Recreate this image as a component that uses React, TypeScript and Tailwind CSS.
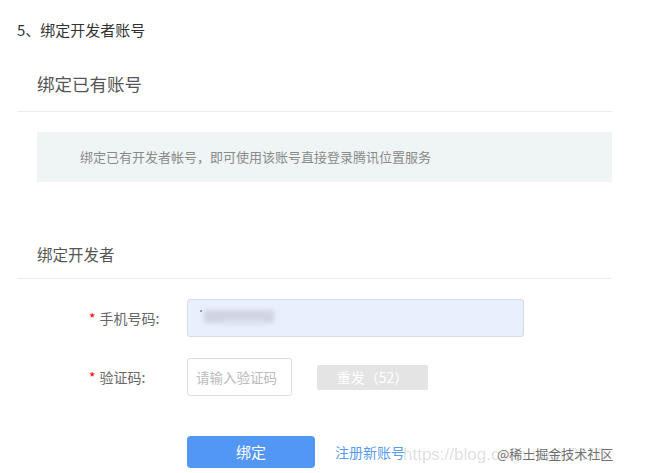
import React from "react";

export default function App() {
  return (
    <div
      className="relative w-[659px] h-[473px] overflow-hidden bg-white"
      style={{ fontFamily: '"Noto Sans CJK SC", "Noto Sans", sans-serif' }}
    >
      <div className="pt-[19px] pl-[17px] text-[15px] leading-[22px] text-[#333]">5、绑定开发者账号</div>

      <div className="ml-[17px] w-[595px] border-b border-[#ececec] pt-[30px] pb-[14px] pl-[20px] text-[17.5px] leading-[26px] text-[#555]">
        绑定已有账号
      </div>

      <div className="mt-[20px] ml-[37px] w-[575px] h-[50px] bg-[#eff4f4] pl-[43px] flex items-center text-[13px] text-[#8a8a8a]">
        绑定已有开发者帐号，即可使用该账号直接登录腾讯位置服务
      </div>

      <div className="ml-[17px] w-[595px] border-b border-[#ececec] pt-[61px] pb-[13px] pl-[20px] text-[15.5px] leading-[22px] text-[#555]">
        绑定开发者
      </div>

      <div className="mt-[20px] flex items-center">
        <div className="w-[187px] pl-[89px] text-[14px] text-[#666]">
          <span className="text-[#f00] mr-[4px]">*</span>手机号码:
        </div>
        <div className="relative w-[337px] h-[38px] rounded-[3px] border border-[#d5dbe8] bg-[#e8f0fe]">
          <div className="absolute left-[12px] top-[10px] w-[2px] h-[2px] bg-[#999]" />
          <div className="absolute left-[16px] top-[10px] w-[70px] h-[13px] bg-[#d0d4e0] blur-[2px]" />
          <div className="absolute left-[36px] top-[20px] w-[40px] h-[5px] bg-[#dde2ee] blur-[2px]" />
        </div>
      </div>

      <div className="mt-[21px] flex items-center">
        <div className="w-[187px] pl-[89px] text-[14px] text-[#666]">
          <span className="text-[#f00] mr-[4px]">*</span>验证码:
        </div>
        <div className="w-[105px] h-[38px] rounded-[3px] border border-[#dcdfe8] flex items-center pl-[8px] text-[13.5px] text-[#bbb]">
          请输入验证码
        </div>
        <div className="ml-[25px] w-[111px] h-[25px] rounded-[2px] bg-[#e4e4e4] flex items-center justify-center text-[14px] text-white">
          重发（52）
        </div>
      </div>

      <div className="mt-[40px] flex items-center">
        <div className="ml-[187px] w-[128px] h-[32px] rounded-[4px] bg-[#5297f3] flex items-center justify-center text-[15px] text-white">
          绑定
        </div>
        <div className="ml-[20px] text-[14px] text-[#5b9cf2]">注册新账号</div>
      </div>

      <div
        className="absolute left-[403px] top-[443px] text-[17px] leading-[24px] text-[#000]/15 whitespace-nowrap"
        style={{ fontFamily: '"Liberation Sans", sans-serif' }}
      >
        https://blog.csdn.net/u0116
      </div>
      <div
        className="absolute left-[497px] top-[445px] text-[13px] leading-[18px] text-[#6f6f6f] whitespace-nowrap"
        style={{ textShadow: "0 0 2px #fff, 0 0 2px #fff" }}
      >
        @稀土掘金技术社区
      </div>
    </div>
  );
}
